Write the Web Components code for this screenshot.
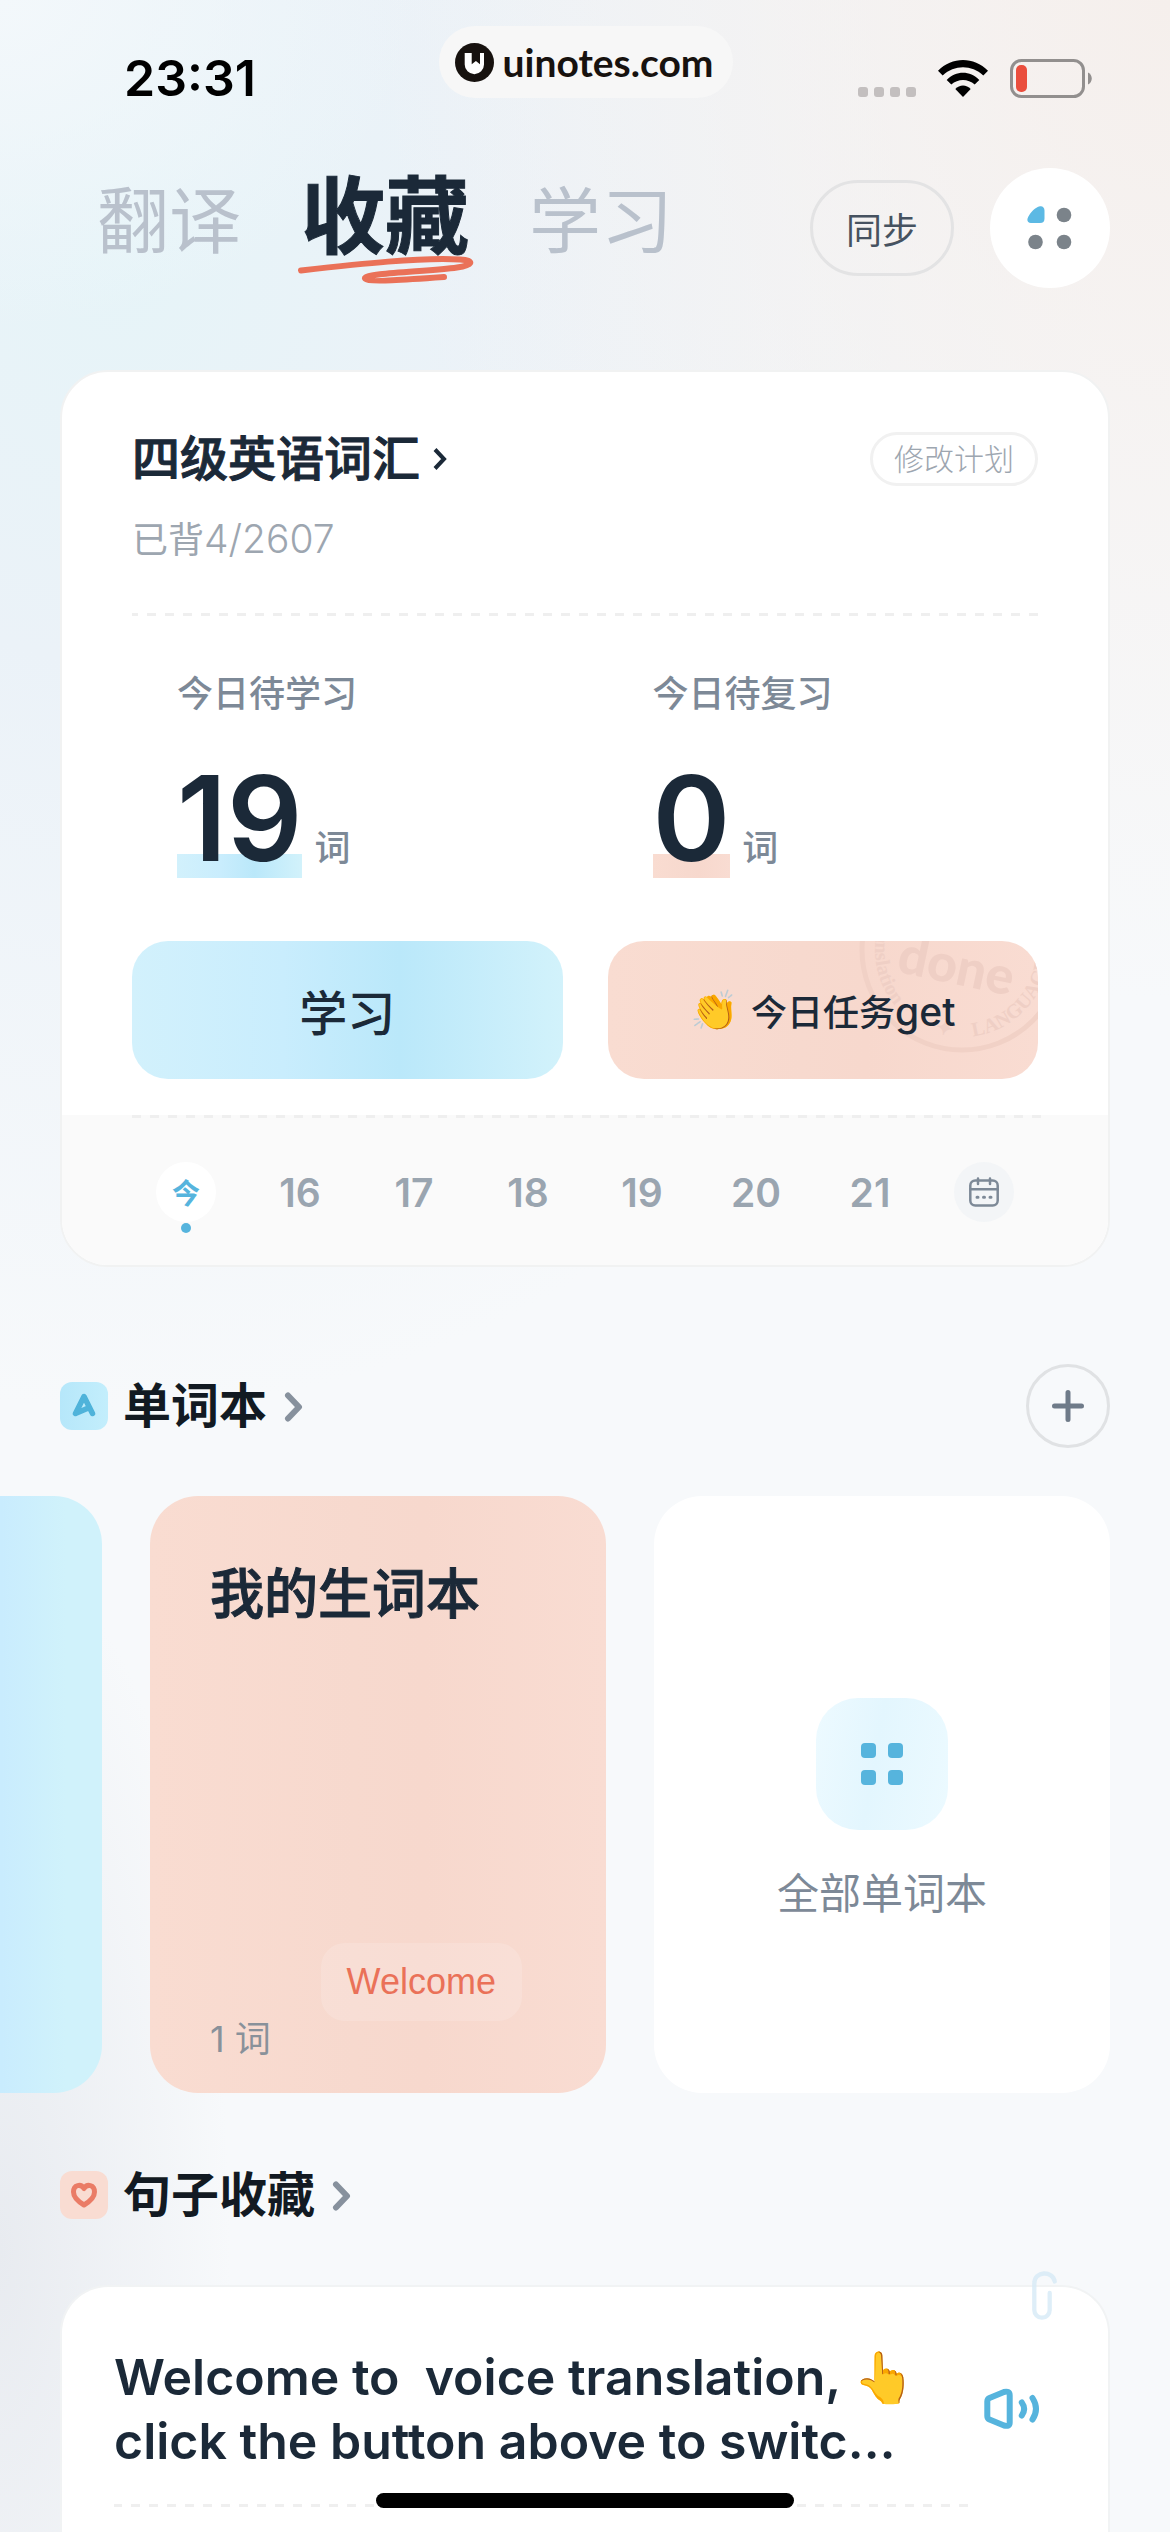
<!DOCTYPE html>
<html lang="zh-CN">
<head>
<meta charset="UTF-8">
<meta name="viewport" content="width=device-width, initial-scale=1">
<title>收藏</title>
<style>
    :root {
        --ink: #1b2938;
        --muted: #7d8997;
        --faint: #9da6b0;
        --blue: #56b4dd;
        --coral: #ea7158;
        --blue-fill: linear-gradient(90deg, #d2f1fc, #c9edfd 35%, #bae8fa 62%, #d2f2fb);
        --coral-fill: linear-gradient(90deg, #f9dcd1, #f7d9ce 45%, #f7d8cd 60%, #f9dcd2);
        --line: #efefef;
        --gutter: 60px;
    }
    body {
        margin: 0;
        background: #f7f9fb;
        color: var(--ink);
        font-family: Inter, "Noto Sans CJK SC", sans-serif;
    }
</style>
</head>
<body>
<collect-page></collect-page>

<script>
class DashLine extends HTMLElement {
    constructor() {
        super()
        this.attachShadow({ mode: 'open' })
        this.shadowRoot.innerHTML = `
            <style>
                :host {
                    display: block;
                    height: 3px;
                    background: repeating-linear-gradient(270deg, var(--line) 0 9px, transparent 9px 18px);
                }
            </style>
        `
    }
}

class StatusBar extends HTMLElement {
    constructor() {
        super()
        this.attachShadow({ mode: 'open' })
        this.shadowRoot.innerHTML = `
            <style>
                :host {
                    display: grid;
                    grid-template-columns: 1fr auto 1fr;
                    align-items: start;
                    padding: 26px 78px 38px 124px;
                    color: #000;
                }
                time {
                    font-size: 50px;
                    font-weight: 600;
                    line-height: 104px;
                }
                .site {
                    display: flex;
                    align-items: center;
                    gap: 8px;
                    height: 72px;
                    margin-right: 44px;
                    padding: 0 19px 0 16px;
                    border-radius: 36px;
                    background: #f7f7f7;
                    color: #17120f;
                    font-family: Lato, sans-serif;
                    font-size: 39px;
                    font-weight: 700;
                    line-height: 72px;
                }
                .icons {
                    display: flex;
                    align-items: center;
                    justify-content: flex-end;
                    gap: 22px;
                    height: 104px;
                }
            </style>
            <time>23:31</time>
            <div class="site">
                <svg width="39" height="39" viewBox="0 0 39 39">
                    <circle cx="19.5" cy="19.5" r="19.5" fill="#17120f"/>
                    <path fill="#fff" d="M9.7 10H16.7V21.3L20.9 18 25 21.3V10H29V21.5A9.6 9.6 0 0 1 9.7 21.5Z"/>
                </svg>
                <span>uinotes.com</span>
            </div>
            <div class="icons">
                <svg width="58" height="39" viewBox="0 0 58 39" fill="#c3bfbf">
                    <rect x="0" y="28" width="10" height="10" rx="3"/>
                    <rect x="16" y="28" width="10" height="10" rx="3"/>
                    <rect x="32" y="28" width="10" height="10" rx="3"/>
                    <rect x="48" y="28" width="10" height="10" rx="3"/>
                </svg>
                <svg width="50" height="39" viewBox="0 -1 50 39">
                    <path d="M0 10.7C14-3.5 36-3.5 50 10.7L45.3 15.4C33.5 4.5 16.5 4.5 4.7 15.4Z"/>
                    <path d="M8.7 20C18 10.3 32 10.3 41.3 20L36.7 24.6C30 18.6 20 18.6 13.3 24.6Z"/>
                    <path d="M17.3 29C21.5 24.2 28.5 24.2 32.7 29L25 37Z"/>
                </svg>
                <svg width="82" height="39" viewBox="0 0 82 39">
                    <rect x="1.5" y="1.5" width="72" height="36" rx="10" fill="none" stroke="#928f8e" stroke-width="3"/>
                    <rect x="6" y="6" width="11" height="27" rx="5" fill="#ea4e3d"/>
                    <path d="M78 13.5C83 15.5 83 23.5 78 25.5Z" fill="#928f8e"/>
                </svg>
            </div>
        `
    }
}

class TopBar extends HTMLElement {
    constructor() {
        super()
        this.attachShadow({ mode: 'open' })
        this.shadowRoot.innerHTML = `
            <style>
                :host {
                    display: flex;
                    align-items: center;
                    justify-content: space-between;
                    height: 120px;
                    padding: 0 var(--gutter) 0 97px;
                }
                nav {
                    display: flex;
                    align-items: baseline;
                    gap: 60px;
                    margin-bottom: 18px;
                }
                a {
                    position: relative;
                    color: #b9c1cc;
                    font-size: 72px;
                    font-weight: 400;
                    line-height: 100px;
                    text-decoration: none;
                }
                a.current {
                    color: var(--ink);
                    font-size: 84px;
                    font-weight: 700;
                    -webkit-text-stroke: 1px currentColor;
                }
                a svg {
                    position: absolute;
                    left: -4px;
                    bottom: -18px;
                }
                .actions {
                    display: flex;
                    align-items: center;
                    gap: 36px;
                }
                button {
                    box-sizing: border-box;
                    height: 96px;
                    padding: 0 33px;
                    border: 3px solid #e3e3e4;
                    border-radius: 48px;
                    background: none;
                    color: #465260;
                    font: 400 36px Inter, "Noto Sans CJK SC", sans-serif;
                }
                button.menu {
                    display: grid;
                    place-items: center;
                    width: 120px;
                    height: 120px;
                    padding: 0;
                    border: 0;
                    border-radius: 50%;
                    background: #fff;
                }
            </style>
            <nav>
                <a href="#translate">翻译</a>
                <a href="#collect" class="current" aria-current="page">收藏<svg width="178" height="30" viewBox="0 0 178 30" fill="none" stroke="#ea7158" stroke-width="6" stroke-linecap="round" stroke-linejoin="round"><path d="M4 15.500C62 9 125 2 163 4.500C179 5.500 175 10.500 160 12.500C132 16.500 66 18 68 23.500C69 27.500 112 24.500 147 22"/></svg></a>
                <a href="#study">学习</a>
            </nav>
            <div class="actions">
                <button type="button">同步</button>
                <button type="button" class="menu" aria-label="菜单">
                    <svg width="46" height="44" viewBox="0 0 46 44">
                        <path fill="#5cb9e4" d="M13 .3C15.500-.2 17.500 1.500 17.500 4.500V12.500C17.500 15.700 16.200 17 13 17H4C.3 17 -.6 13.800 1.400 10.500C4.200 5.800 8 1.500 13 .3Z"/>
                        <g fill="#7b838a"><circle cx="37" cy="9" r="7.300"/><circle cx="8.500" cy="36" r="7.300"/><circle cx="37" cy="36" r="7.300"/></g>
                    </svg>
                </button>
            </div>
        `
    }
}

class StatItem extends HTMLElement {
    constructor() {
        super()
        this.attachShadow({ mode: 'open' })
        this.shadowRoot.innerHTML = `
            <style>
                :host {
                    display: block;
                    padding-left: 45px;
                    color: var(--muted);
                    font-size: 36px;
                    font-weight: 500;
                }
                .label { line-height: 54px; }
                .row {
                    display: flex;
                    align-items: baseline;
                    gap: 12px;
                    height: 120px;
                    margin-top: 37px;
                }
                .num {
                    background: var(--mark) bottom / 100% 24px no-repeat;
                    color: var(--ink);
                    font-size: 118px;
                    font-weight: 600;
                    line-height: 120px;
                }
            </style>
            <div class="label"><slot></slot></div>
            <div class="row">
                <span class="num"><slot name="num"></slot></span>
                <span>词</span>
            </div>
        `
    }
}

class WeekStrip extends HTMLElement {
    constructor() {
        super()
        this.attachShadow({ mode: 'open' })
        const days = [16, 17, 18, 19, 20, 21]
        this.shadowRoot.innerHTML = `
            <style>
                :host {
                    display: block;
                    padding: 0 67px 43px;
                    background: #fafafa;
                }
                .days {
                    display: grid;
                    grid-template-columns: repeat(8, 1fr);
                    justify-items: center;
                    padding-top: 44px;
                }
                button {
                    display: grid;
                    place-items: center;
                    position: relative;
                    width: 60px;
                    height: 60px;
                    padding: 0;
                    border: 0;
                    border-radius: 50%;
                    background: none;
                    color: #9aa5b0;
                    font: 600 39px Inter, "Noto Sans CJK SC", sans-serif;
                }
                button.today {
                    background: #fff;
                    color: var(--blue);
                    font-size: 28px;
                    font-weight: 700;
                }
                button.today::after {
                    content: "";
                    position: absolute;
                    top: 61px;
                    width: 10px;
                    height: 10px;
                    border-radius: 50%;
                    background: var(--blue);
                }
                button.more { background: #f3f5f7; }
            </style>
            <dash-line></dash-line>
            <div class="days">
                <button type="button" class="today">今</button>
                ${days.map((d) => `<button type="button">${d}</button>`).join('')}
                <button type="button" class="more" aria-label="日历">
                    <svg width="32" height="30" viewBox="0 0 32 30" fill="none" stroke="#7d8997" stroke-width="2.500" stroke-linecap="round">
                        <rect x="2.300" y="3.500" width="27.400" height="25" rx="5"/>
                        <path d="M2.300 12.300H29.700M10 1.500V7M22 1.500V7"/>
                        <path d="M9 20.200H10M15.500 20.200H16.500M22 20.200H23" stroke-width="3"/>
                    </svg>
                </button>
            </div>
        `
    }
}

class PlanCard extends HTMLElement {
    constructor() {
        super()
        this.attachShadow({ mode: 'open' })
        this.shadowRoot.innerHTML = `
            <style>
                :host {
                    display: block;
                    margin: 82px var(--gutter) 0;
                    border: 2px solid #f1f2f2;
                    border-radius: 48px;
                    background: #fff;
                    overflow: hidden;
                }
                .main { padding: 60px 70px 36px; }
                .head {
                    display: flex;
                    align-items: center;
                    justify-content: space-between;
                }
                .head a {
                    display: flex;
                    align-items: center;
                    gap: 12px;
                    color: inherit;
                    text-decoration: none;
                }
                h1 {
                    margin: 0;
                    font-size: 48px;
                    font-weight: 500;
                    line-height: 54px;
                    -webkit-text-stroke: 1px currentColor;
                }
                .edit {
                    box-sizing: border-box;
                    height: 54px;
                    padding: 0 21px;
                    border: 3px solid #f1f1f1;
                    border-radius: 27px;
                    background: none;
                    color: var(--faint);
                    font: 300 30px/48px Inter, "Noto Sans CJK SC", sans-serif;
                }
                .progress {
                    margin: 27px 0 46px;
                    color: var(--faint);
                    font-size: 36px;
                    line-height: 54px;
                }
                .progress span {
                    font-size: 39px;
                    font-weight: 300;
                    line-height: 1;
                }
                .grid {
                    display: grid;
                    grid-template-columns: 1fr 1fr;
                    gap: 45px;
                }
                .stats { margin: 51px 0 63px; }
                .blue { --mark: var(--blue-fill); }
                .coral { --mark: var(--coral-fill); }
                .grid button {
                    display: flex;
                    align-items: center;
                    justify-content: center;
                    gap: 12px;
                    position: relative;
                    height: 138px;
                    padding: 0;
                    border: 0;
                    border-radius: 36px;
                    background: var(--mark);
                    color: var(--ink);
                    font: 500 48px Inter, "Noto Sans CJK SC", sans-serif;
                    overflow: hidden;
                }
                .grid button.coral { font-size: 36px; }
                .emoji { font-size: 39px; }
                .stamp {
                    position: absolute;
                    top: -94px;
                    right: -27px;
                }
                .text { position: relative; }
                .text b {
                    font-size: 39px;
                    font-weight: 500;
                }
            </style>
            <div class="main">
                <div class="head">
                    <a href="#plan">
                        <h1>四级英语词汇</h1>
                        <svg width="16" height="24" viewBox="0 0 16 24" fill="none" stroke="#1b2938" stroke-width="4"><path d="M3 2.500L12 12 3 21.500"/></svg>
                    </a>
                    <button type="button" class="edit">修改计划</button>
                </div>
                <div class="progress">已背<span>4/2607</span></div>
                <dash-line></dash-line>
                <div class="grid stats">
                    <stat-item class="blue">今日待学习<span slot="num">19</span></stat-item>
                    <stat-item class="coral">今日待复习<span slot="num">0</span></stat-item>
                </div>
                <div class="grid">
                    <button type="button" class="blue">学习</button>
                    <button type="button" class="coral">
                        <svg class="stamp" width="206" height="206" viewBox="0 0 206 206" fill="#efcfc5">
                            <defs><path id="ring" d="M103 16A87 87 0 0 0 103 190A87 87 0 0 0 103 16"/></defs>
                            <circle cx="103" cy="103" r="100" fill="none" stroke="#f1d1c6" stroke-width="5"/>
                            <text x="97" y="137" text-anchor="middle" transform="rotate(12 97 121)" font-family="Lato, sans-serif" font-size="52" font-weight="900">done</text>
                            <g font-family="Liberation Serif, serif" font-size="20" font-weight="700">
                                <text><textPath href="#ring" startOffset="98">Translation</textPath></text>
                                <text><textPath href="#ring" startOffset="246">✦</textPath></text>
                                <text><textPath href="#ring" startOffset="284">LANGUAGE</textPath></text>
                            </g>
                        </svg>
                        <span class="emoji">👏</span>
                        <span class="text">今日任务<b>get</b></span>
                    </button>
                </div>
            </div>
            <week-strip></week-strip>
        `
    }
}

class SectionHead extends HTMLElement {
    constructor() {
        super()
        this.attachShadow({ mode: 'open' })
        this.shadowRoot.innerHTML = `
            <style>
                :host {
                    display: flex;
                    align-items: center;
                    justify-content: space-between;
                    min-height: 84px;
                    padding: 0 var(--gutter);
                }
                a {
                    display: flex;
                    align-items: center;
                    gap: 15px;
                    color: #121a22;
                    text-decoration: none;
                }
                h2 {
                    margin: 0;
                    font-size: 48px;
                    font-weight: 700;
                    line-height: 60px;
                }
            </style>
            <a href="#more">
                <slot name="icon"></slot>
                <h2><slot></slot></h2>
                <svg width="24" height="32" viewBox="0 0 24 32" fill="none" stroke="#87919d" stroke-width="6" stroke-linecap="round" stroke-linejoin="round"><path d="M6 5.500L17 17 6 28.500"/></svg>
            </a>
            <slot name="action"></slot>
        `
    }
}

class WordBook extends HTMLElement {
    constructor() {
        super()
        this.attachShadow({ mode: 'open' })
        this.shadowRoot.innerHTML = `
            <style>
                :host {
                    box-sizing: border-box;
                    display: flex;
                    flex-direction: column;
                    height: 597px;
                    padding: 60px 60px 36px;
                    border-radius: 48px;
                    background: var(--fill, #fff);
                }
                h3 {
                    margin: 0;
                    font-size: 54px;
                    font-weight: 500;
                    line-height: 78px;
                    -webkit-text-stroke: 1px currentColor;
                }
                .chip {
                    align-self: flex-end;
                    margin: auto 24px 0 0;
                    padding: 0 26px;
                    border-radius: 24px;
                    background: rgba(255, 255, 255, 0.15);
                    color: var(--coral);
                    font: 36px/78px "Liberation Sans", sans-serif;
                }
                .chip[hidden] { display: none; }
                .count {
                    color: #89919a;
                    font-size: 36px;
                    font-weight: 400;
                    line-height: 36px;
                }
            </style>
            <h3><slot></slot></h3>
            <span class="chip"><slot name="word"></slot></span>
            <div class="count"><slot name="count"></slot></div>
        `
    }
    connectedCallback() {
        this.shadowRoot.querySelector('.chip').hidden = !this.querySelector('[slot="word"]')
    }
}

class WordShelf extends HTMLElement {
    constructor() {
        super()
        this.attachShadow({ mode: 'open' })
        this.shadowRoot.innerHTML = `
            <style>
                :host {
                    display: flex;
                    justify-content: flex-end;
                    gap: 48px;
                    margin-top: 48px;
                    padding-right: var(--gutter);
                    overflow: hidden;
                }
                word-book, .all {
                    flex: 0 0 456px;
                }
                .blue { --fill: linear-gradient(90deg, #d2f1fc, #c9ecfe 78%, #d0f2fb 92%); }
                .coral { --fill: var(--coral-fill); }
                .all {
                    box-sizing: border-box;
                    display: flex;
                    flex-direction: column;
                    align-items: center;
                    justify-content: center;
                    gap: 34px;
                    padding-top: 32px;
                    border-radius: 48px;
                    background: #fff;
                    color: var(--muted);
                    font-size: 42px;
                    line-height: 60px;
                    text-decoration: none;
                }
                .tile {
                    display: grid;
                    place-items: center;
                    width: 132px;
                    height: 132px;
                    border-radius: 42px;
                    background: linear-gradient(100deg, #edfaff, #e3f6fe 45%, #ecfaff);
                }
            </style>
            <word-book class="blue"></word-book>
            <word-book class="coral">我的生词本<span slot="word">Welcome</span><span slot="count">1 词</span></word-book>
            <a class="all" href="#all">
                <span class="tile">
                    <svg width="44" height="44" viewBox="0 0 44 44" fill="#56b4dd">
                        <rect x="1" y="1" width="15" height="15" rx="4"/><rect x="28" y="1" width="15" height="15" rx="4"/>
                        <rect x="1" y="28" width="15" height="15" rx="4"/><rect x="28" y="28" width="15" height="15" rx="4"/>
                    </svg>
                </span>
                <span>全部单词本</span>
            </a>
        `
    }
}

class SentenceCard extends HTMLElement {
    constructor() {
        super()
        this.attachShadow({ mode: 'open' })
        this.shadowRoot.innerHTML = `
            <style>
                :host {
                    display: grid;
                    grid-template-columns: 1fr 56px;
                    column-gap: 16px;
                    align-content: start;
                    align-items: center;
                    flex: 1;
                    position: relative;
                    margin: 48px var(--gutter) 0;
                    padding: 58px 68px 0 52px;
                    border: 2px solid #f1f3f4;
                    border-bottom: 0;
                    border-radius: 48px 48px 0 0;
                    background: #fff;
                }
                p {
                    margin: 0 0 31px;
                    font-size: 50px;
                    font-weight: 600;
                    line-height: 64px;
                    white-space: pre-wrap;
                }
                button {
                    height: 42px;
                    margin-bottom: 31px;
                    padding: 0;
                    border: 0;
                    background: none;
                }
                .clip {
                    position: absolute;
                    top: -16px;
                    right: 48px;
                }
            </style>
            <svg class="clip" width="30" height="50" viewBox="0 0 30 50" fill="none" stroke="#d6eaf6" stroke-opacity="0.8" stroke-width="4.300" stroke-linecap="round"><path d="M19.700 22V39A7.700 7.700 0 0 1 4.300 39V12.500C4.300-.5 23-.5 24.700 10.500"/></svg>
            <p><slot></slot></p>
            <button type="button" aria-label="朗读">
                <svg width="56" height="42" viewBox="0 0 56 42" fill="none" stroke="#56b4dd" stroke-width="6" stroke-linecap="round" stroke-linejoin="round">
                    <path d="M3.300 13.500Q3.300 11 5.500 10L20 4Q25.700 2.500 25.700 7.500V34.500Q25.700 39 20 37.500L5.500 31.500Q3.300 30.500 3.300 28Z"/>
                    <path d="M37.800 14.500Q42.500 21 37.800 27.500M48.500 10Q55.500 21 48.500 31.500"/>
                </svg>
            </button>
            <dash-line></dash-line>
        `
    }
}

class HomeIndicator extends HTMLElement {
    constructor() {
        super()
        this.attachShadow({ mode: 'open' })
        this.shadowRoot.innerHTML = `
            <style>
                :host {
                    position: fixed;
                    bottom: 24px;
                    left: 50%;
                    width: 418px;
                    height: 15px;
                    border-radius: 8px;
                    background: #000;
                    transform: translateX(-50%);
                }
            </style>
        `
    }
}

class CollectPage extends HTMLElement {
    constructor() {
        super()
        this.attachShadow({ mode: 'open' })
        this.shadowRoot.innerHTML = `
            <style>
                :host {
                    display: flex;
                    flex-direction: column;
                    min-height: 100vh;
                    background:
                        radial-gradient(ellipse 230px 700px at 0 2250px, #e8ebf0, rgba(232, 235, 240, 0)),
                        radial-gradient(ellipse 420px 330px at 0 0, #f3f8fb, rgba(243, 248, 251, 0)),
                        radial-gradient(ellipse 800px 1000px at 100% 0, #f5efec, rgba(244, 240, 240, 0)),
                        radial-gradient(ellipse 1000px 1150px at 10% 260px, #e6f4f8, #ebf2f8 35%, rgba(240, 243, 247, 0)),
                        #f7f9fb;
                }
                .words { margin-top: 97px; }
                .sentences { margin-top: 60px; }
                .badge {
                    display: block;
                    border-radius: 12px;
                }
                .badge.blue { background: linear-gradient(90deg, #b6e7fa, #c3eefc); }
                .badge.coral { background: #f9dcd2; }
                .add {
                    display: grid;
                    place-items: center;
                    box-sizing: border-box;
                    width: 84px;
                    height: 84px;
                    padding: 0;
                    border: 3px solid #e0e2e4;
                    border-radius: 50%;
                    background: none;
                }
            </style>
            <status-bar></status-bar>
            <top-bar></top-bar>
            <plan-card></plan-card>
            <section-head class="words">
                <svg slot="icon" class="badge blue" width="48" height="48" viewBox="0 0 48 48" fill="none" stroke="#4fb3da" stroke-width="5.500" stroke-linecap="round" stroke-linejoin="round"><path d="M32.500 31.500L24 14.500 15.500 31.500 29.500 25.500"/></svg>
                单词本
                <button slot="action" type="button" class="add" aria-label="新建单词本">
                    <svg width="34" height="34" viewBox="0 0 34 34" stroke="#6f7b89" stroke-width="5" stroke-linecap="round"><path d="M17 3.500V30.500M3.500 17H30.500"/></svg>
                </button>
            </section-head>
            <word-shelf></word-shelf>
            <section-head class="sentences">
                <svg slot="icon" class="badge coral" width="48" height="48" viewBox="0 0 48 48" fill="none" stroke="#ea7c66" stroke-width="5" stroke-linejoin="round"><path d="M24 17.500C21 12.500 13.500 13.500 13.500 21C13.500 27 19 31 24 34C29 31 34.500 27 34.500 21C34.500 13.500 27 12.500 24 17.500Z"/></svg>
                句子收藏
            </section-head>
            <sentence-card>Welcome to  voice translation, 👆
click the button above to switc…</sentence-card>
            <home-indicator></home-indicator>
        `
    }
}

customElements.define('dash-line', DashLine)
customElements.define('status-bar', StatusBar)
customElements.define('top-bar', TopBar)
customElements.define('stat-item', StatItem)
customElements.define('week-strip', WeekStrip)
customElements.define('plan-card', PlanCard)
customElements.define('section-head', SectionHead)
customElements.define('word-book', WordBook)
customElements.define('word-shelf', WordShelf)
customElements.define('sentence-card', SentenceCard)
customElements.define('home-indicator', HomeIndicator)
customElements.define('collect-page', CollectPage)
</script>
</body>
</html>
